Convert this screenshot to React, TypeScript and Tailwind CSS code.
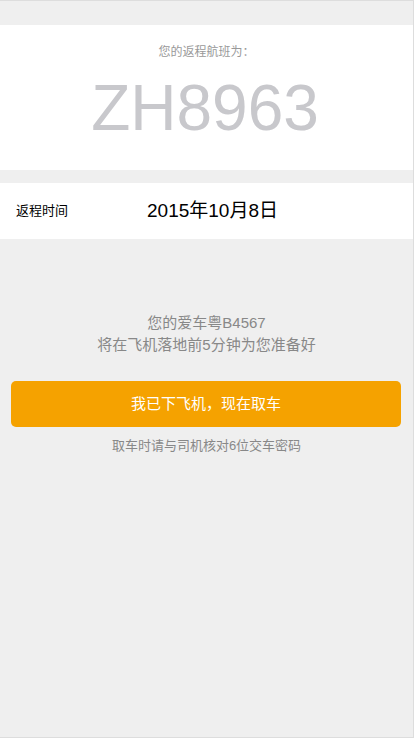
import React from "react";

export default function App() {
  return (
    <div
      className="w-[414px] h-[738px] bg-[#efefef] border-t border-r border-b border-[#dddddd] box-border"
      style={{ fontFamily: '"Liberation Sans", Arial, "Noto Sans CJK SC", sans-serif' }}
    >
      <div className="pt-[24px]">
        <div className="bg-white h-[145px] flex flex-col items-center">
          <div className="pt-[18px] text-[12px] leading-[18px] text-[#999999]">您的返程航班为：</div>
          <div className="mt-[15px] -ml-[3px] text-[64px] leading-[64px] text-[#c8c8cc]">ZH8963</div>
        </div>
        <div className="mt-[13px] bg-white h-[56px] flex items-center">
          <div className="pl-[16px] w-[147px] text-[13px] text-black">返程时间</div>
          <div className="text-[19px] text-black leading-[24px]">2015年10月8日</div>
        </div>
        <div className="mt-[73px] flex flex-col items-center text-[15px] leading-[22px] text-[#888888]">
          <div>您的爱车粤B4567</div>
          <div>将在飞机落地前5分钟为您准备好</div>
        </div>
        <div className="mt-[25px] ml-[11px] mr-[12px] h-[46px] rounded-[5px] bg-[#f5a200] flex items-center justify-center text-white text-[15px]">
          我已下飞机，现在取车
        </div>
        <div className="mt-[10px] text-center text-[13px] leading-[18px] text-[#888888]">
          取车时请与司机核对6位交车密码
        </div>
      </div>
    </div>
  );
}
